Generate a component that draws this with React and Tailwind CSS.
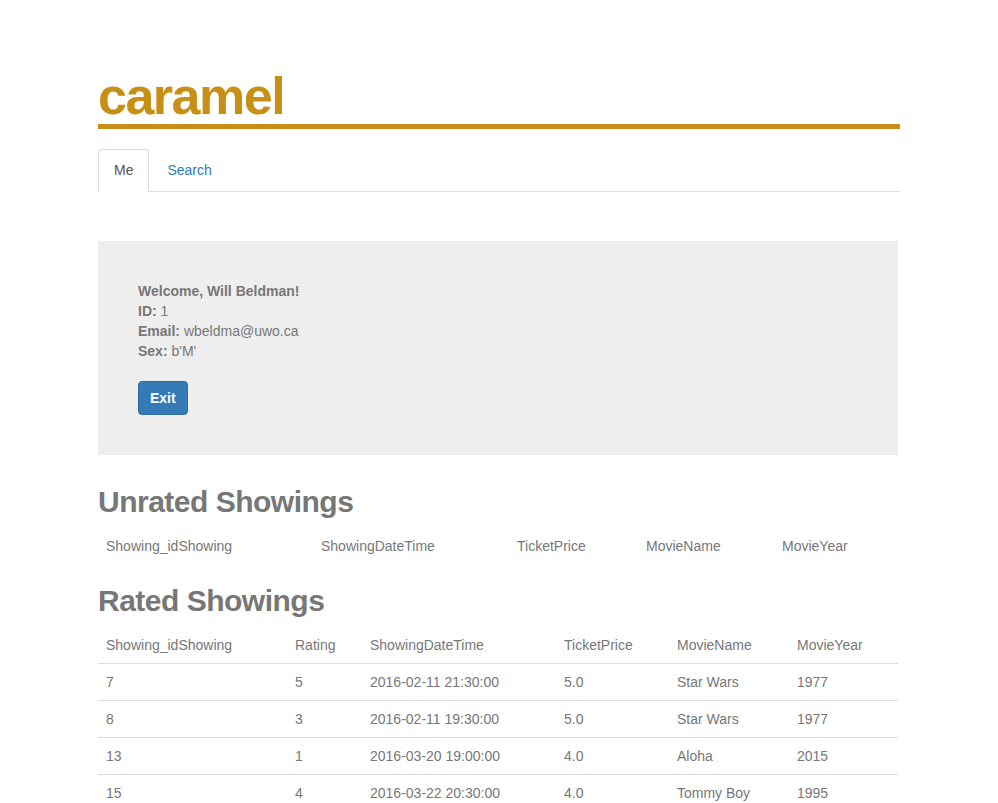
import React from 'react';

const unratedCols = [
    { label: 'Showing_idShowing', w: 'w-[215px]' },
    { label: 'ShowingDateTime', w: 'w-[196px]' },
    { label: 'TicketPrice', w: 'w-[129px]' },
    { label: 'MovieName', w: 'w-[136px]' },
    { label: 'MovieYear', w: '' },
];

const ratedCols = [
    { label: 'Showing_idShowing', w: 'w-[189px]' },
    { label: 'Rating', w: 'w-[75px]' },
    { label: 'ShowingDateTime', w: 'w-[194px]' },
    { label: 'TicketPrice', w: 'w-[113px]' },
    { label: 'MovieName', w: 'w-[120px]' },
    { label: 'MovieYear', w: '' },
];

const rated = [
    ['7', '5', '2016-02-11 21:30:00', '5.0', 'Star Wars', '1977'],
    ['8', '3', '2016-02-11 19:30:00', '5.0', 'Star Wars', '1977'],
    ['13', '1', '2016-03-20 19:00:00', '4.0', 'Aloha', '2015'],
    ['15', '4', '2016-03-22 20:30:00', '4.0', 'Tommy Boy', '1995'],
];

export default function App() {
    return (
        <div className="min-h-screen bg-white font-['Liberation_Sans',Arial,sans-serif] text-[14px] leading-[20px] text-[#777]">
            <div className="w-[802px] ml-[98px] pt-[68px]">
                <h1 className="text-[52px] leading-[56px] font-bold text-[#c88f16] border-b-[5px] border-[#c88f16] tracking-[-1.5px]">
                    caramel
                </h1>

                <ul className="flex mt-[20px] border-b border-[#ddd]">
                    <li className="-mb-px mr-[2px] px-[15px] py-[10px] bg-white border border-[#ddd] border-b-transparent rounded-t-[4px] text-[#555]">
                        Me
                    </li>
                    <li className="mr-[2px] px-[15px] py-[10px] border border-transparent text-[#337ab7]">
                        Search
                    </li>
                </ul>

                <div className="w-[800px] mt-[49px] mb-[30px] bg-[#eee] px-[40px] pt-[40px] pb-[40px]">
                    <p className="font-bold">Welcome, Will Beldman!</p>
                    <p><span className="font-bold">ID:</span> 1</p>
                    <p><span className="font-bold">Email:</span> wbeldma@uwo.ca</p>
                    <p><span className="font-bold">Sex:</span> b'M'</p>
                    <button className="mt-[20px] px-[11px] py-[6px] bg-[#337ab7] border border-[#2e6da4] rounded-[4px] text-white font-bold">
                        Exit
                    </button>
                </div>

                <h2 className="text-[30px] leading-[33px] font-bold tracking-[-0.5px] mb-[10px]">Unrated Showings</h2>
                <table className="w-[800px] text-left">
                    <thead>
                        <tr>
                            {unratedCols.map((c) => (
                                <th key={c.label} className={`${c.w} p-[8px] font-normal`}>{c.label}</th>
                            ))}
                        </tr>
                    </thead>
                </table>

                <h2 className="mt-[20px] text-[30px] leading-[33px] font-bold tracking-[-0.5px] mb-[10px]">Rated Showings</h2>
                <table className="w-[800px] text-left border-collapse">
                    <thead>
                        <tr>
                            {ratedCols.map((c) => (
                                <th key={c.label} className={`${c.w} p-[8px] font-normal`}>{c.label}</th>
                            ))}
                        </tr>
                    </thead>
                    <tbody>
                        {rated.map((row) => (
                            <tr key={row[0]} className="border-t border-[#ddd]">
                                {row.map((cell, i) => (
                                    <td key={i} className="p-[8px]">{cell}</td>
                                ))}
                            </tr>
                        ))}
                    </tbody>
                </table>
            </div>
        </div>
    );
}
